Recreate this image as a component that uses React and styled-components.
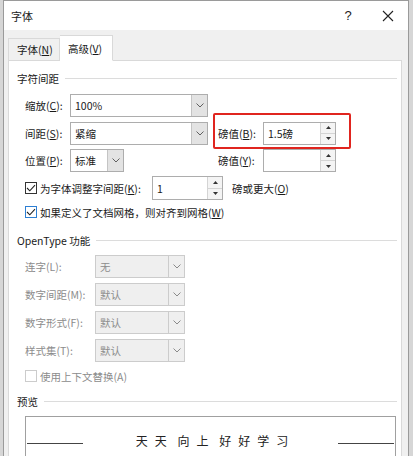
import styled, { createGlobalStyle } from 'styled-components';

const GlobalStyle = createGlobalStyle`
  html, body {
    margin: 0;
    padding: 0;
    background: #d6d6d6;
    overflow: hidden;
  }
  body {
    font-family: 'Noto Sans CJK SC', 'Noto Sans', sans-serif;
    font-size: 10.5px;
    color: #1a1a1a;
  }
`;

// Window frame
const Dialog = styled.div`
  margin-left: 3px;
  width: 406px;
  height: 100vh;
  box-sizing: border-box;
  overflow: hidden;
  border: 1px solid #9a9a9a;
  border-bottom: none;
  background: #f0f0f0;
  display: flex;
  flex-direction: column;
`;

const TitleBar = styled.div`
  flex-shrink: 0;
  height: 29px;
  background: #fff;
  display: flex;
  align-items: center;
  padding-left: 7px;
  font-size: 11px;
`;

const TitleText = styled.div`
  flex: 1;
`;

const TitleButton = styled.div`
  width: 40px;
  display: flex;
  justify-content: center;
  align-items: center;
  color: #222;
  font-family: 'Liberation Sans', sans-serif;
  font-size: 13px;
`;

const Body = styled.div`
  flex: 1;
  min-height: 0;
  padding: 5px 6px 0 4px;
  display: flex;
  flex-direction: column;
`;

// Tabs
const TabStrip = styled.div`
  flex-shrink: 0;
  display: flex;
  align-items: flex-end;
  height: 26px;
  margin-bottom: -1px;
  position: relative;
  z-index: 1;
`;

const Tab = styled.div`
  width: ${(p) => (p.$active ? 53 : 52)}px;
  height: ${(p) => (p.$active ? 26 : 23)}px;
  box-sizing: border-box;
  border: 1px solid #d9d9d9;
  border-bottom: ${(p) => (p.$active ? '1px solid #fff' : '1px solid #d9d9d9')};
  border-left: ${(p) => (p.$active ? 'none' : '1px solid #d9d9d9')};
  background: ${(p) => (p.$active ? '#fff' : '#f0f0f0')};
  display: flex;
  align-items: center;
  padding-left: 8px;
  padding-top: ${(p) => (p.$active ? 1 : 0)}px;
`;

const Panel = styled.div`
  flex: 1;
  min-height: 0;
  overflow: hidden;
  background: #fff;
  border: 1px solid #d9d9d9;
  border-bottom: none;
  padding: 9px 4px 0 8px;
  display: flex;
  flex-direction: column;
  & > * {
    flex-shrink: 0;
  }
`;

const u = (ch) => <span style={{ textDecoration: 'underline' }}>{ch}</span>;

// Group header with rule
const GroupHeader = styled.div`
  display: flex;
  align-items: center;
  height: 16px;
  margin-top: ${(p) => p.$top || 0}px;
  &::after {
    content: '';
    flex: 1;
    height: 1px;
    background: #dcdcdc;
    margin-left: 6px;
  }
`;

const Indent = styled.div`
  padding-left: 8px;
  display: flex;
  flex-direction: column;
`;

const SpacingGrid = styled.div`
  display: grid;
  grid-template-columns: 45px 148px 45px 73px;
  grid-auto-rows: 23px;
  row-gap: 4.5px;
  align-items: center;
  margin-top: 8px;
`;

const Label = styled.div`
  color: ${(p) => (p.$disabled ? '#8c8c8c' : '#1a1a1a')};
  white-space: nowrap;
`;

const Highlight = styled.div`
  position: relative;
  grid-column: 3 / span 2;
  display: grid;
  grid-template-columns: 45px 73px;
  align-items: center;
  height: 23px;
  &::after {
    content: '';
    position: absolute;
    left: -5px;
    right: -15px;
    top: -9px;
    bottom: -4px;
    border: 2px solid #e0251f;
    border-radius: 2px;
    pointer-events: none;
  }
`;

// Combo box
const Select = styled.div`
  width: ${(p) => p.$w}px;
  height: 23px;
  box-sizing: border-box;
  border: 1px solid ${(p) => (p.$disabled ? '#cccccc' : '#adadad')};
  background: ${(p) => (p.$disabled ? '#efefef' : '#fff')};
  color: ${(p) => (p.$disabled ? '#8c8c8c' : '#1a1a1a')};
  display: flex;
  align-items: stretch;
`;

const SelectValue = styled.div`
  flex: 1;
  display: flex;
  align-items: center;
  padding-left: 4px;
`;

const DropButton = styled.div`
  width: 15px;
  border-left: 1px solid ${(p) => (p.$disabled ? '#cccccc' : '#c4c4c4')};
  background: ${(p) => (p.$disabled ? '#efefef' : '#e3e3e3')};
  display: flex;
  align-items: center;
  justify-content: center;
`;

const Chevron = ({ color = '#606060' }) => (
  <svg width="8" height="5" viewBox="0 0 8 5">
    <path d="M0.5 0.5 L4 4 L7.5 0.5" fill="none" stroke={color} strokeWidth="1" />
  </svg>
);

const Combo = ({ w, value, disabled }) => (
  <Select $w={w} $disabled={disabled}>
    <SelectValue>{value}</SelectValue>
    <DropButton $disabled={disabled}>
      <Chevron color={disabled ? '#8a8a8a' : '#606060'} />
    </DropButton>
  </Select>
);

// Spin box
const SpinBox = styled.div`
  width: ${(p) => p.$w}px;
  height: ${(p) => p.$h || 23}px;
  box-sizing: border-box;
  border: 1px solid #adadad;
  background: #fff;
  display: flex;
`;

const SpinValue = styled.div`
  flex: 1;
  display: flex;
  align-items: center;
  padding-left: 4px;
`;

const SpinButtons = styled.div`
  width: 14px;
  margin-left: 3px;
  border-left: 1px solid #d4d4d4;
  display: flex;
  flex-direction: column;
`;

const SpinHalf = styled.div`
  flex: 1;
  display: flex;
  align-items: center;
  justify-content: center;
  background: #f4f4f4;
  & + & {
    border-top: 1px solid #d4d4d4;
  }
`;

const Tri = ({ down }) => (
  <svg width="5" height="3" viewBox="0 0 5 3">
    <path d={down ? 'M0 0 L5 0 L2.5 3 Z' : 'M0 3 L5 3 L2.5 0 Z'} fill="#333" />
  </svg>
);

const Spinner = ({ w, h, value }) => (
  <SpinBox $w={w} $h={h}>
    <SpinValue>{value}</SpinValue>
    <SpinButtons>
      <SpinHalf>
        <Tri />
      </SpinHalf>
      <SpinHalf>
        <Tri down />
      </SpinHalf>
    </SpinButtons>
  </SpinBox>
);

// Check box
const CheckRow = styled.div`
  display: flex;
  align-items: center;
  height: ${(p) => p.$h || 16}px;
  margin-top: ${(p) => p.$top || 0}px;
  color: ${(p) => (p.$disabled ? '#8c8c8c' : '#1a1a1a')};
`;

const Box = styled.div`
  width: 12px;
  height: 12px;
  box-sizing: border-box;
  border: 1px solid ${(p) => p.$border};
  background: #fff;
  margin-right: 3px;
  display: flex;
  align-items: center;
  justify-content: center;
`;

const Check = () => (
  <svg width="10" height="8" viewBox="0 0 10 8">
    <path d="M1 4 L3.8 6.8 L9 1.2" fill="none" stroke="#222" strokeWidth="1.1" />
  </svg>
);

const FeatureList = styled.div`
  display: flex;
  flex-direction: column;
  gap: 5px;
  margin-top: 7px;
`;

const FeatureRow = styled.div`
  display: flex;
  align-items: center;
  height: 23px;
`;

const FeatureLabel = styled(Label)`
  width: 70px;
`;

const PreviewBox = styled.div`
  margin: 7px 1px 0 8px;
  height: 60px;
  border: 1px solid #a0a0a0;
  border-bottom: none;
  display: flex;
  align-items: flex-start;
  padding-top: 16px;
  box-sizing: border-box;
`;

const PreviewLine = styled.div`
  width: 56px;
  height: 1px;
  background: #444;
  margin: 10px 1px 0;
`;

const PreviewText = styled.div`
  flex: 1;
  text-align: center;
  font-size: 12px;
  letter-spacing: 7px;
  word-spacing: -6px;
  line-height: 16px;
  color: #222;
  padding-left: 10px;
`;

const App = () => {
  return (
    <>
      <GlobalStyle />
      <Dialog>
        <TitleBar>
          <TitleText>字体</TitleText>
          <TitleButton>?</TitleButton>
          <TitleButton>
            <svg width="12" height="12" viewBox="0 0 12 12">
              <path d="M1 1 L11 11 M11 1 L1 11" stroke="#222" strokeWidth="1.1" />
            </svg>
          </TitleButton>
        </TitleBar>

        <Body>
          <TabStrip>
            <Tab>字体({u('N')})</Tab>
            <Tab $active>高级({u('V')})</Tab>
          </TabStrip>

          <Panel>
            <GroupHeader>字符间距</GroupHeader>
            <Indent>
              <SpacingGrid>
                <Label>缩放({u('C')}):</Label>
                <Combo w={138} value="100%" />
                <div />
                <div />

                <Label>间距({u('S')}):</Label>
                <Combo w={138} value="紧缩" />
                <Highlight>
                  <Label>磅值({u('B')}):</Label>
                  <Spinner w={73} value="1.5磅" />
                </Highlight>

                <Label>位置({u('P')}):</Label>
                <Combo w={54} value="标准" />
                <Label>磅值({u('Y')}):</Label>
                <Spinner w={73} value="" />
              </SpacingGrid>

              <CheckRow $h={24} $top={4}>
                <Box $border="#333">
                  <Check />
                </Box>
                <span style={{ width: 112 }}>为字体调整字间距({u('K')}):</span>
                <Spinner w={71} h={24} value="1" />
                <span style={{ marginLeft: 9 }}>磅或更大({u('O')})</span>
              </CheckRow>

              <CheckRow $top={4}>
                <Box $border="#2d7fd3">
                  <Check />
                </Box>
                如果定义了文档网格，则对齐到网格({u('W')})
              </CheckRow>
            </Indent>

            <GroupHeader $top={12}>OpenType 功能</GroupHeader>
            <Indent>
              <FeatureList>
                <FeatureRow>
                  <FeatureLabel $disabled>连字(L):</FeatureLabel>
                  <Combo w={90} value="无" disabled />
                </FeatureRow>
                <FeatureRow>
                  <FeatureLabel $disabled>数字间距(M):</FeatureLabel>
                  <Combo w={90} value="默认" disabled />
                </FeatureRow>
                <FeatureRow>
                  <FeatureLabel $disabled>数字形式(F):</FeatureLabel>
                  <Combo w={90} value="默认" disabled />
                </FeatureRow>
                <FeatureRow>
                  <FeatureLabel $disabled>样式集(T):</FeatureLabel>
                  <Combo w={90} value="默认" disabled />
                </FeatureRow>
              </FeatureList>
              <CheckRow $top={6} $disabled>
                <Box $border="#cccccc" />
                使用上下文替换(A)
              </CheckRow>
            </Indent>

            <GroupHeader $top={9}>预览</GroupHeader>
            <PreviewBox>
              <PreviewLine />
              <PreviewText>天天 向上 好好学习</PreviewText>
              <PreviewLine />
            </PreviewBox>
          </Panel>
        </Body>
      </Dialog>
    </>
  );
};

export default App;
